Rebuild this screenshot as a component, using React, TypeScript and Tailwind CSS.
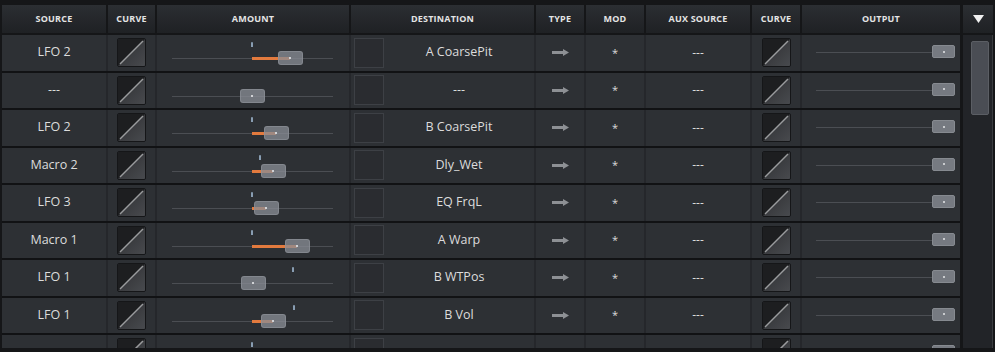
import React from 'react';

type Row = { src: string; dst: string; thumb: number; marker?: number; orange: boolean };

const rows: Row[] = [
  { src: 'LFO 2', dst: 'A CoarsePit', thumb: 290, marker: 251, orange: true },
  { src: '---', dst: '---', thumb: 252, orange: false },
  { src: 'LFO 2', dst: 'B CoarsePit', thumb: 276, marker: 251, orange: true },
  { src: 'Macro 2', dst: 'Dly_Wet', thumb: 273, marker: 259, orange: true },
  { src: 'LFO 3', dst: 'EQ FrqL', thumb: 266, marker: 251, orange: true },
  { src: 'Macro 1', dst: 'A Warp', thumb: 297, marker: 251, orange: true },
  { src: 'LFO 1', dst: 'B WTPos', thumb: 253, marker: 292, orange: false },
  { src: 'LFO 1', dst: 'B Vol', thumb: 273, marker: 293, orange: true },
  { src: '', dst: '', thumb: 252, marker: 251, orange: false },
];

const AMOUNT_X = 157;
const CENTER = 95;

function CurveBox() {
  return (
    <div className="w-[29px] h-[29px] rounded-[2px] border border-[#151618] overflow-hidden">
      <svg width="27" height="27" viewBox="0 0 27 27">
        <defs>
          <linearGradient id="cg" x1="0" y1="0" x2="1" y2="1">
            <stop offset="0" stopColor="#2c2d30" />
            <stop offset="1" stopColor="#484a4e" />
          </linearGradient>
        </defs>
        <rect width="27" height="27" fill="#1d1e20" />
        <polygon points="27,0 27,27 0,27" fill="url(#cg)" />
        <line x1="2" y1="25" x2="25" y2="2" stroke="#9a9b9d" strokeWidth="1.5" />
      </svg>
    </div>
  );
}

function Arrow() {
  return (
    <svg width="17" height="7" viewBox="0 0 17 7">
      <rect x="0" y="2" width="12" height="3" fill="#8d9094" />
      <polygon points="11,0 17,3.5 11,7" fill="#8d9094" />
    </svg>
  );
}

function Amount({ r }: { r: Row }) {
  const t = r.thumb - AMOUNT_X;
  const lo = Math.min(CENTER, t);
  const hi = Math.max(CENTER, t);
  return (
    <div className="relative w-[192px] h-full bg-[#2d3034]">
      <div className="absolute left-[15px] top-[23px] w-[161px] h-px bg-[#4b4e53]" />
      {r.marker && (
        <div
          className="absolute top-[7px] w-[2px] h-[5px] bg-[#9fb9d2]/80 rounded-t-full"
          style={{ left: r.marker - AMOUNT_X }}
        />
      )}
      {r.orange && (
        <div className="absolute top-[22px] h-[3px] bg-[#e27a3e]" style={{ left: lo, width: hi - lo }} />
      )}
      <div
        className="absolute top-[16px] w-[25px] h-[14px] rounded-[3px] bg-[#8a8e95]/75 border border-[#8f939a]/60 flex items-center justify-center"
        style={{ left: t - 12.5 }}
      >
        <div className="w-[2px] h-[2px] bg-[#d0d2d5]" />
      </div>
    </div>
  );
}

function Output() {
  return (
    <div className="relative w-[158px] h-full bg-[#2d3034]">
      <div className="absolute left-[14px] top-[17px] w-[117px] h-px bg-[#4b4e53]" />
      <div className="absolute left-[130px] top-[10px] w-[23px] h-[13px] rounded-[2px] bg-[#767a81] border border-[#868a90] flex items-center justify-center">
        <div className="w-[2px] h-[2px] bg-[#c9cbce]" />
      </div>
    </div>
  );
}

const cell = 'h-full bg-[#2d3034] flex items-center justify-center';

function Header() {
  const h = 'h-full bg-gradient-to-b from-[#2b2e32] to-[#1f2124] flex items-center justify-center text-[9px] font-bold text-[#e4e4e4] tracking-[0.2px]';
  return (
    <div className="h-[28px] flex gap-[2px]">
      <div className={`${h} w-[104px]`}>SOURCE</div>
      <div className={`${h} w-[47px]`}>CURVE</div>
      <div className={`${h} w-[192px]`}>AMOUNT</div>
      <div className={`${h} w-[183px]`}>DESTINATION</div>
      <div className={`${h} w-[48px]`}>TYPE</div>
      <div className={`${h} w-[58px]`}>MOD</div>
      <div className={`${h} w-[104px]`}>AUX SOURCE</div>
      <div className={`${h} w-[48px]`}>CURVE</div>
      <div className={`${h} w-[158px]`}>OUTPUT</div>
    </div>
  );
}

export default function App() {
  return (
    <div
      className="w-[995px] h-[352px] bg-[#151618] pt-[5px] pl-[2px] flex gap-[3px] overflow-hidden text-[#dcdcdc]"
      style={{ fontFamily: '"Open Sans", "Liberation Sans", sans-serif' }}
    >
      <div className="w-[958px] flex flex-col">
        <Header />
        <div className="mt-[2px] h-[313px] overflow-hidden flex flex-col shrink-0">
          {rows.map((r, i) => {
            const last = i === rows.length - 1;
            return (
              <div key={i} className="h-[37.5px] shrink-0 border-b-2 border-[#111214] flex gap-[2px] bg-[#25272b]">
                <div className={`${cell} w-[104px] text-[12.5px]`}>{r.src}</div>
                <div className={`${cell} w-[47px]`}>
                  <CurveBox />
                </div>
                <Amount r={r} />
                <div className="h-full w-[183px] bg-[#2d3034] flex items-center">
                  <div className="ml-[3px] w-[30px] h-[30px] border border-[#3d4045] bg-[#2a2c30]" />
                  <div className="flex-1 text-center text-[12.5px]">{r.dst}</div>
                </div>
                <div className={`${cell} w-[48px]`}>{!last && <Arrow />}</div>
                <div className={`${cell} w-[58px] text-[11px]`}>{last ? '' : '*'}</div>
                <div className={`${cell} w-[104px] text-[12px]`}>{last ? '' : '---'}</div>
                <div className={`${cell} w-[48px]`}>
                  <CurveBox />
                </div>
                <Output />
              </div>
            );
          })}
        </div>
      </div>
      <div className="w-[30px] flex flex-col">
        <div className="h-[28px] bg-gradient-to-b from-[#2b2e32] to-[#1f2124] flex items-center justify-center">
          <svg width="11" height="8" viewBox="0 0 11 8">
            <polygon points="0,0 11,0 5.5,8" fill="#f0f0f0" />
          </svg>
        </div>
        <div className="mt-[2px] h-[313px] bg-[#222428] border-r border-[#3a3c40] pt-[6px] pl-[8px]">
          <div className="w-[18px] h-[74px] rounded-[2px] bg-[#4a4d54] border border-[#5b5e64]" />
        </div>
      </div>
    </div>
  );
}
